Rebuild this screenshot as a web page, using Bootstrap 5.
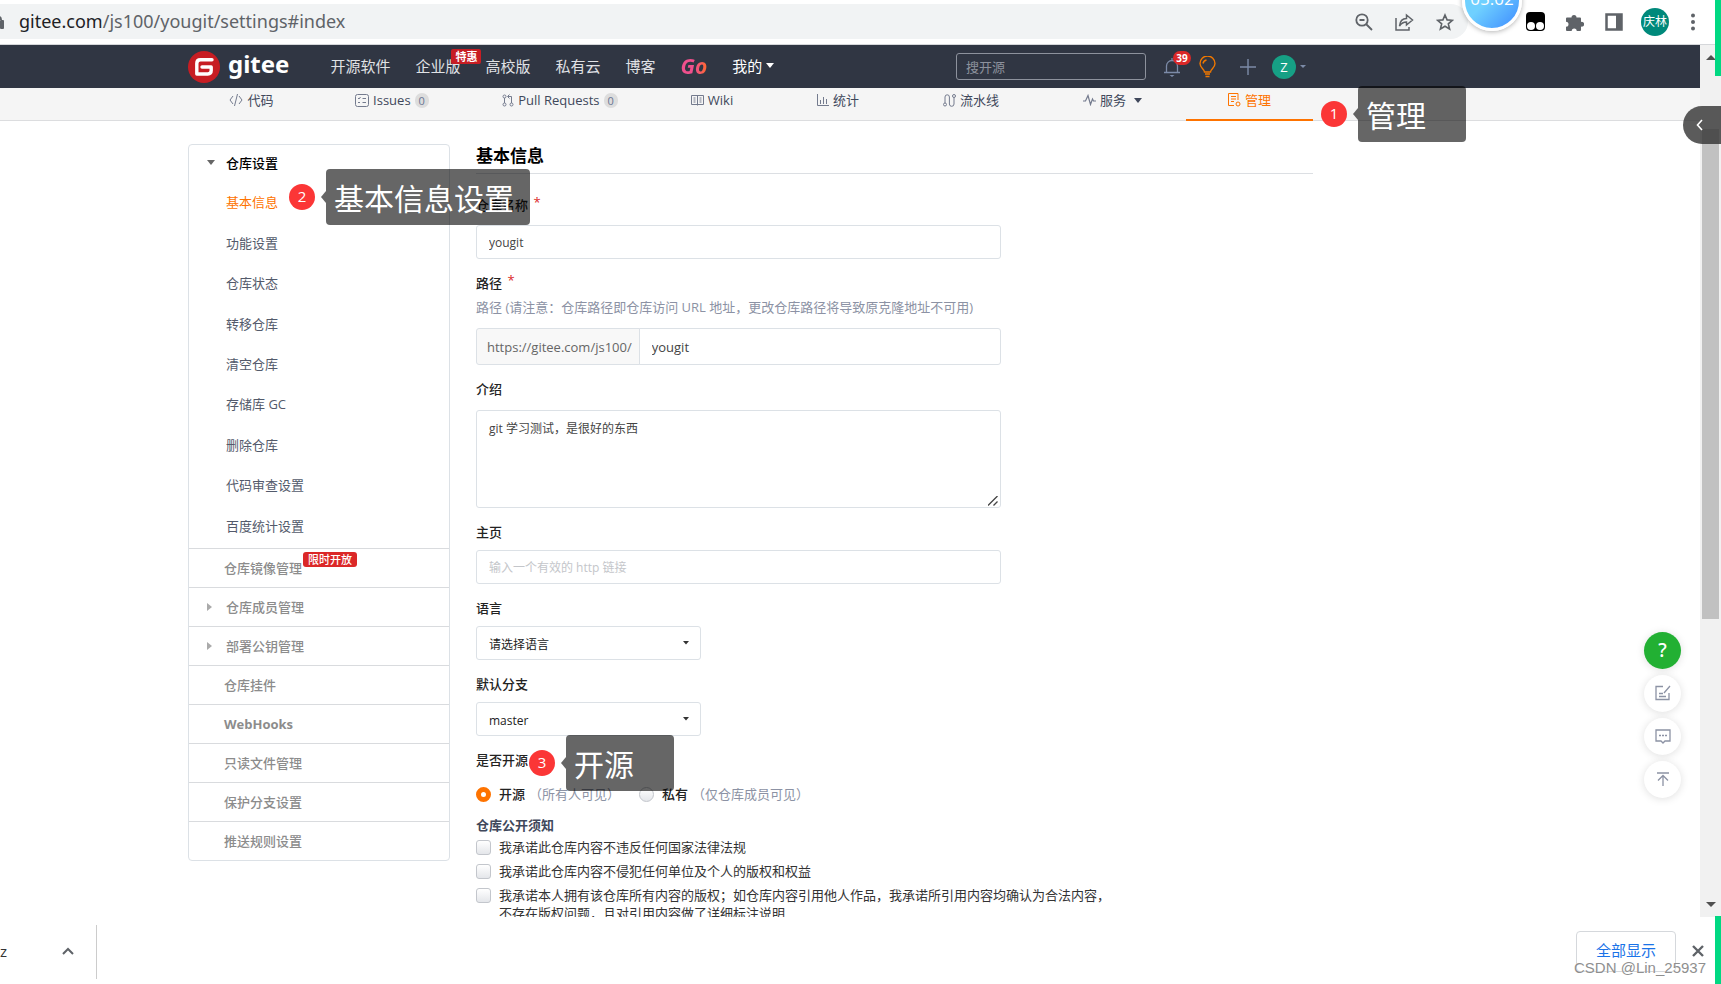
<!DOCTYPE html>
<html lang="zh-CN">
<head>
<meta charset="utf-8">
<meta name="viewport" content="width=device-width, initial-scale=1">
<title>gitee.com/js100/yougit/settings#index</title>
<link href="https://cdn.jsdelivr.net/npm/bootstrap@5.3.0/dist/css/bootstrap.min.css" rel="stylesheet">
<style>
:root{--ink:#40485b;--muted:#8c92a4;--orange:#fe7300;--line:#dce1e6;--dark:#303643}
body{font-family:"Open Sans","Noto Sans CJK SC",sans-serif;font-size:13px;line-height:20px;color:#333;background:#fff}
a{text-decoration:none;color:inherit}
svg{display:block;flex:none}
button{border:0;background:none;padding:0;color:inherit}
.z-lift{z-index:5}
/* browser chrome */
.chrome-bar{height:45px;border-bottom:1px solid #d5d7da;padding:4px 25px 5px 0;color:#5f6368}
.omnibox{height:35px;background:#f1f3f4;border-radius:0 18px 18px 0;padding-right:14px;gap:22px}
.address{height:35px;margin-left:-7px;font:18px/34px "Noto Sans",sans-serif;color:#5f6368}
.address b{font-weight:400;color:#202124}
.clock{left:1462px;top:-29px;width:60px;height:60px;border-radius:50%;border:3px solid #fff;background:linear-gradient(135deg,#6fd0ff 45%,#3d8bff);box-shadow:0 1px 5px rgba(0,0,0,.3);color:#fff;font-size:17px;text-align:center;padding-top:15px}
.ext-icons{gap:21px;padding-left:58px}
.profile{width:28px;height:28px;margin-left:-3px;border-radius:50%;background:#00897b;color:#fff;font-size:12px}
.edge-strip{right:0;width:6px;background:#00d882}
/* page */
.wrap-main{margin-left:188px;max-width:1125px}
.site-nav{height:43px;background:var(--dark);color:#e0e2e6;font-size:15px}
.brand-word{font:bold 24px/30px "Noto Sans",sans-serif;color:#fff;padding-bottom:6px}
.menu-set{gap:25px;margin-left:41px;padding-bottom:2px}
.promo{left:36px;top:-7px;background:#c71d23;color:#fff;font:bold 11px/15px "Noto Sans CJK SC",sans-serif;padding:0 4px;border-radius:2px;white-space:nowrap}
.go-word{font:italic bold 21px/24px "Noto Sans",sans-serif;background:linear-gradient(90deg,#f0508c 55%,#ff6a2b);-webkit-background-clip:text;color:transparent}
.tri{display:inline-block;border:4px solid transparent;border-top:5px solid currentColor;border-bottom:0}
.tri-s{border-width:3px 3px 0}
.nav-tools{padding-right:7px}
.search-box{width:190px;height:27px;background:transparent;border:1px solid #8d929d;border-radius:3px;padding:0 9px;font-size:13px;color:#fff}
.search-box::placeholder{color:#8d929d}
.bell{margin:0 18px 0 17px}
.count{left:10px;top:-6px;min-width:18px;height:14px;border-radius:7px;background:#db2828;color:#fff;font:bold 10px/14px "Open Sans",sans-serif;text-align:center}
.me{width:24px;height:24px;border-radius:50%;background:#16a085;color:#fff;font-size:13px}
.tab-strip{height:33px;background:#f5f5f5;border-bottom:1px solid #dcdddf;color:var(--ink)}
.tab-grid{display:grid;grid-template-columns:127fr 154fr 182fr 122fr 130fr 136fr 147fr 127fr}
.tab-grid>a{height:33px;padding-bottom:9px;gap:4px;color:var(--ink);stroke:#747b8e}
.tab-grid>a.on{color:var(--orange);stroke:var(--orange);border-bottom:2px solid var(--orange);padding-bottom:7px}
.pill{background:#ddd;border-radius:8px;font-size:11px;line-height:15px;padding:0 4px;color:#6b7794}
/* sidebar */
.side{width:262px;border:1px solid var(--line);border-radius:4px;color:#8c8c8c}
.side-head{height:37px;padding:0 0 2px 37px;color:#000;font-weight:500}
.side-sub{min-height:366px;padding-bottom:2px;color:#535a6b}
.side-sub a{flex:1;padding-left:37px}
.side-sub a.on{color:var(--orange)}
.side-row{height:39px;border-top:1px solid #d9dbde;padding:0 0 1px 35px;font-weight:500}
.side-row.nest{padding-left:37px}
.fold{left:18px}
.fresh{background:#db2828;color:#fff;font-size:11px;line-height:15px;padding:0 5px;margin-left:1px;border-radius:3px;align-self:flex-start;margin-top:3px}
/* form */
.pane{margin-left:26px}
.pane h1{font-size:17px;line-height:24px;font-weight:700;color:#000;margin:0 0 21px;padding-bottom:5px;border-bottom:1px solid #dcdfe3}
.half{width:525px}
.cap{display:block;font-weight:500;color:#222;line-height:20px}
.cap sup{color:#db2828;font-size:13px;top:-3px;left:2px}
.field{margin-bottom:14px}
.hint{color:var(--muted)}
.half .form-control,.half .form-select,.half .input-group-text{border-color:var(--line);border-radius:3px;font-size:12px;color:#444;padding:1px 12px 0;height:34px}
.half .form-control::placeholder{color:#c4c6ca}
.half .input-group>*{height:37px;font-size:13px}
.half .input-group-text{background:#f8f8f8;color:#666;padding:2px 7px 0 10px;border-radius:3px 0 0 3px}
.half textarea.form-control{height:98px;padding:9px 12px;line-height:18px;resize:none;background:no-repeat right 2px bottom 1px/10px 10px url("data:image/svg+xml,%3Csvg xmlns='http://www.w3.org/2000/svg' viewBox='0 0 10 10'%3E%3Cpath d='M0 9.500L9.500 0M5.500 9.500L9.500 5.500' stroke='%23444' stroke-width='1.300'/%3E%3C/svg%3E")}
.half .form-select{width:225px;padding:3px 12px 0;color:#222;background:no-repeat right 11px center/6px 4px url("data:image/svg+xml,%3Csvg xmlns='http://www.w3.org/2000/svg' viewBox='0 0 6 4'%3E%3Cpath d='M0 0h6L3 3.500z' fill='%23333'/%3E%3C/svg%3E")}
.tick{appearance:none;flex:none;width:15px;height:15px;margin:0 8px 0 0;border:1px solid #c3c6cc;border-radius:3px;background:linear-gradient(#fff,#e4e6ea)}
.tick[type=radio]{border-radius:50%}
.tick[type=radio]:checked{border:5px solid var(--orange);background:#fff}
.pledge{line-height:18px;max-width:640px;margin-bottom:6px}
.pledge .tick{margin-top:2px}
/* step notes */
.note{display:flex;align-items:center;z-index:6;color:#fff;white-space:nowrap}
.note i{font-style:normal;width:26px;height:26px;line-height:25px;border-radius:50%;background:#fb3636;text-align:center;font-size:15px}
.note span{position:relative;height:56px;min-width:108px;padding:0 16px 0 8px;margin-left:11px;border-radius:4px;background:rgba(0,0,0,.6);font:30px/56px "Noto Sans CJK SC",sans-serif}
.note span::before{content:"";position:absolute;left:-5px;top:22px;border:6px solid transparent;border-width:6px 5px 6px 0;border-right-color:rgba(0,0,0,.6)}
.note-1{left:135px;top:-2px}
.note-2{left:100px;top:50%;transform:translateY(-33px)}
.note-3{left:53px;top:-15px}
/* right side */
.scroll-rail{width:21px;background:#f1f1f1;color:#505050;padding:9px 2px}
.scroll-thumb{top:84px;left:2px;width:17px;height:490px;background:#c1c1c1}
.drawer{right:0;top:61px;width:38px;height:38px;border-radius:19px 0 0 19px;background:rgba(50,50,50,.8)}
.helpers{right:40px;bottom:119px;gap:6px}
.helpers button{width:37px;height:37px;border-radius:50%;background:#fff;box-shadow:0 1px 8px rgba(0,0,0,.13);stroke:var(--muted)}
.helpers .ask{background:#22b033;color:#fff;font:500 19px/37px "Noto Sans",sans-serif}
/* downloads */
.shelf{height:68px;padding-right:17px}
.shelf-item{width:97px;height:54px;margin-top:8px;border-right:1px solid #ccc;padding:0 22px 2px 0;font-size:15px}
.show-all{width:100px;height:41px;margin-top:14px;border:1px solid #d5d8dc;border-radius:4px;color:#1a73e8;font-size:15px;padding-bottom:3px}
.shut{margin:28px 0 0 16px}
.mark-text{right:15px;bottom:5px;font:15px/22px "Liberation Sans",sans-serif;color:#8f8f8f;text-shadow:0 0 1px #fff}
</style>
</head>
<body class="vh-100 d-flex flex-column overflow-hidden position-relative">
<header class="chrome-bar d-flex align-items-center position-relative">
  <div class="omnibox d-flex align-items-center flex-grow-1">
    <svg width="4" height="14" fill="#5f6368"><rect y="5" width="4" height="9" rx="1"/><path d="M0 1q2 1 2 4H0z"/></svg>
    <div class="address flex-grow-1"><b>gitee.com</b>/js100/yougit/settings#index</div>
    <svg width="18" height="18" fill="none" stroke="#5f6368" stroke-width="1.800"><circle cx="7" cy="7" r="5.700"/><path d="M11 11l6 6M4.500 7h5"/></svg>
    <svg width="19" height="18" fill="none" stroke="#5f6368" stroke-width="1.500"><path d="M1 5v12h13v-3M4.500 13c.5-5 3-7.500 7-7.500V2l6 5-6 5V9c-3 0-5 1-7 4z"/></svg>
    <svg width="18" height="18" fill="none" stroke="#5f6368" stroke-width="1.600"><path d="M9 2l2.100 4.900 5.200.4-4 3.500 1.300 5.200L9 13.200 4.400 16l1.300-5.200-4-3.500 5.200-.4z"/></svg>
  </div>
  <div class="clock position-absolute">05:02</div>
  <div class="ext-icons d-flex align-items-center">
    <svg width="19" height="19"><rect width="19" height="19" rx="4" fill="#000"/><circle cx="5" cy="14" r="4" fill="#fff"/><circle cx="14" cy="14" r="4" fill="#fff"/></svg>
    <svg width="18" height="18" fill="#5f6368"><path d="M1 4.500h4.500a2.500 2.500 0 1 1 5 0H14q1 0 1 1V9a2.400 2.400 0 1 1 0 4.500V17q0 1-1 1h-3.300a2.500 2.500 0 0 0-5 0H1q-1 0-1-1v-3.300a2.500 2.500 0 0 0 0-5V5.500q0-1 1-1z"/></svg>
    <svg width="18" height="18"><path d="M1.500 1.500h15v15h-15z" fill="none" stroke="#5f6368" stroke-width="2.500"/><path d="M11 1h6v16h-6z" fill="#5f6368"/></svg>
    <span class="profile d-flex align-items-center justify-content-center">庆林</span>
    <svg width="6" height="18" fill="#5f6368"><circle cx="3" cy="2.500" r="2"/><circle cx="3" cy="9" r="2"/><circle cx="3" cy="15.500" r="2"/></svg>
  </div>
</header>

<div class="d-flex flex-grow-1 overflow-hidden position-relative">
  <div class="flex-grow-1 overflow-hidden">
    <nav class="site-nav">
      <div class="wrap-main h-100 d-flex align-items-center">
        <a href="#" class="d-flex align-items-center">
          <svg width="32" height="32" viewBox="0 0 32 32"><circle cx="16" cy="16" r="16" fill="#c71d23"/><path d="M24 8.800H12.500Q8.800 8.800 8.800 12.500V23h11q3.400 0 3.400-3.400V16H14" fill="none" stroke="#fff" stroke-width="3.400" stroke-linecap="round" stroke-linejoin="round"/></svg>
          <span class="brand-word ms-2">gitee</span>
        </a>
        <div class="menu-set d-flex align-items-center">
          <a href="#">开源软件</a>
          <a href="#" class="position-relative">企业版<span class="promo position-absolute">特惠</span></a>
          <a href="#">高校版</a>
          <a href="#">私有云</a>
          <a href="#">博客</a>
          <a href="#" class="go-word">Go</a>
          <a href="#" class="text-white d-flex align-items-center gap-1">我的<span class="tri"></span></a>
        </div>
        <div class="nav-tools ms-auto d-flex align-items-center">
          <input class="form-control search-box" type="search" placeholder="搜开源" aria-label="搜开源">
          <a href="#" class="bell position-relative" aria-label="通知">
            <svg width="18" height="20" fill="none" stroke="#7c8ba8" stroke-width="1.300"><path d="M1 15.500h16M3.500 15V9a5.500 5.500 0 0 1 11 0v6M9 1v2"/><path d="M6.500 18h5L9 20z" fill="#7c8ba8" stroke="none"/></svg>
            <span class="count position-absolute">39</span>
          </a>
          <svg width="17" height="22" fill="none" stroke="#f07800" stroke-width="1.400"><path d="M5.500 16c0-3-4.500-4-4.500-8.500a7.500 7.500 0 0 1 15 0C16 12 11.500 13 11.500 16zM4 7.500A4.500 4.500 0 0 1 7.500 4M6 18h5M6.500 20.500h4" /></svg>
          <svg class="ms-4 me-3" width="16" height="16" stroke="#7c8ba8" stroke-width="1.400"><path d="M8 0v16M0 8h16"/></svg>
          <span class="me d-flex align-items-center justify-content-center">Z</span>
          <span class="tri tri-s ms-1" style="color:#7c8ba8"></span>
        </div>
      </div>
    </nav>

    <div class="tab-strip">
      <div class="wrap-main tab-grid">
        <a href="#" class="d-flex align-items-center justify-content-center"><svg width="14" height="12" fill="none"><path d="M4 2L1 6l3 4M10 2l3 4-3 4M8.500 0l-3 12"/></svg>代码</a>
        <a href="#" class="d-flex align-items-center justify-content-center"><svg width="14" height="13" fill="none"><rect x=".5" y=".5" width="13" height="12" rx="2"/><path d="M3 4l1 1 1.500-2M3 8.500h2M7.500 4.500H11M7.500 8.500H11"/></svg>Issues<span class="pill">0</span></a>
        <a href="#" class="d-flex align-items-center justify-content-center"><svg width="12" height="13" fill="none"><circle cx="2.500" cy="2.500" r="1.500"/><circle cx="2.500" cy="10.500" r="1.500"/><circle cx="9.500" cy="10.500" r="1.500"/><path d="M2.500 4v5M9.500 9V2.500H6M7.500.5l-2 2 2 2"/></svg>Pull Requests<span class="pill">0</span></a>
        <a href="#" class="d-flex align-items-center justify-content-center"><svg width="13" height="11" fill="none"><path d="M.5.5h12v9H.5zM6.500.5v10M2.500 3h2M2.500 5h2M2.500 7h2M8.500 3h2M8.500 5h2M8.500 7h2"/></svg>Wiki</a>
        <a href="#" class="d-flex align-items-center justify-content-center"><svg width="12" height="12" fill="none"><path d="M.5 0v11.500H12M3.500 6v4M6.500 3v7M9.500 5v5"/></svg>统计</a>
        <a href="#" class="d-flex align-items-center justify-content-center"><svg width="13" height="13" fill="none"><circle cx="2" cy="10.500" r="1.500"/><circle cx="11" cy="2" r="1.500"/><path d="M2 9V3a2.200 2.200 0 0 1 4.400 0v7A2.200 2.200 0 0 0 11 10V3.500"/></svg>流水线</a>
        <a href="#" class="d-flex align-items-center justify-content-center"><svg width="13" height="12" fill="none"><path d="M0 7h2.500L5 1.500l2.500 9L9.500 5l1 2H13" stroke-width="1.200"/></svg>服务<span class="tri ms-1"></span></a>
        <a href="#" class="on d-flex align-items-center justify-content-center position-relative"><svg width="13" height="14" fill="none"><path d="M6 12.500H.5V.500H10V7M3 3.500h5M3 6h5M3 8.500h3"/><circle cx="10" cy="11" r="2"/></svg>管理
          <span class="note note-1 position-absolute"><i>1</i><span>管理</span></span></a>
      </div>
    </div>

    <main class="wrap-main d-flex align-items-start" style="padding-top:23px">
      <aside class="side flex-shrink-0">
        <a href="#" class="side-head d-flex align-items-center position-relative"><span class="tri fold position-absolute" style="color:#666"></span>仓库设置</a>
        <div class="side-sub d-flex flex-column">
          <a href="#" class="on d-flex align-items-center position-relative">基本信息<span class="note note-2 position-absolute"><i>2</i><span>基本信息设置</span></span></a>
          <a href="#" class="d-flex align-items-center">功能设置</a>
          <a href="#" class="d-flex align-items-center">仓库状态</a>
          <a href="#" class="d-flex align-items-center">转移仓库</a>
          <a href="#" class="d-flex align-items-center">清空仓库</a>
          <a href="#" class="d-flex align-items-center">存储库 GC</a>
          <a href="#" class="d-flex align-items-center">删除仓库</a>
          <a href="#" class="d-flex align-items-center">代码审查设置</a>
          <a href="#" class="d-flex align-items-center">百度统计设置</a>
        </div>
        <a href="#" class="side-row d-flex align-items-center">仓库镜像管理<span class="fresh">限时开放</span></a>
        <a href="#" class="side-row nest d-flex align-items-center position-relative"><svg class="fold position-absolute" width="5" height="8" fill="#aaa"><path d="M0 0l5 4-5 4z"/></svg>仓库成员管理</a>
        <a href="#" class="side-row nest d-flex align-items-center position-relative"><svg class="fold position-absolute" width="5" height="8" fill="#aaa"><path d="M0 0l5 4-5 4z"/></svg>部署公钥管理</a>
        <a href="#" class="side-row d-flex align-items-center">仓库挂件</a>
        <a href="#" class="side-row d-flex align-items-center fw-bold">WebHooks</a>
        <a href="#" class="side-row d-flex align-items-center">只读文件管理</a>
        <a href="#" class="side-row d-flex align-items-center">保护分支设置</a>
        <a href="#" class="side-row d-flex align-items-center">推送规则设置</a>
      </aside>

      <form class="pane flex-grow-1">
        <h1>基本信息</h1>
        <div class="half">
          <div class="field"><label class="cap" for="f-name" style="margin-bottom:10px">仓库名称 <sup>*</sup></label>
            <input class="form-control" id="f-name" value="yougit"></div>
          <div class="field"><label class="cap mb-1" for="f-path">路径 <sup>*</sup></label>
            <div class="hint" style="margin-bottom:11px">路径 (请注意：仓库路径即仓库访问 URL 地址，更改仓库路径将导致原克隆地址不可用)</div>
            <div class="input-group"><span class="input-group-text">https://gitee.com/js100/</span><input class="form-control" id="f-path" value="yougit"></div></div>
          <div class="field"><label class="cap" for="f-desc" style="margin-bottom:11px">介绍</label>
            <textarea class="form-control" id="f-desc">git 学习测试，是很好的东西</textarea></div>
          <div class="field"><label class="cap mb-2" for="f-home">主页</label>
            <input class="form-control" id="f-home" placeholder="输入一个有效的 http 链接"></div>
          <div class="field"><label class="cap mb-2" for="f-lang">语言</label>
            <select class="form-select" id="f-lang"><option>请选择语言</option></select></div>
          <div class="field"><label class="cap mb-2" for="f-branch">默认分支</label>
            <select class="form-select" id="f-branch"><option>master</option></select></div>
        </div>
        <div class="cap position-relative" style="margin-bottom:14px">是否开源<span class="note note-3 position-absolute"><i>3</i><span>开源</span></span></div>
        <div class="d-flex" style="margin-bottom:11px;gap:19px">
          <label class="d-flex align-items-center"><input class="tick" type="radio" name="open" checked><span class="cap">开源</span><span class="hint ms-1">（所有人可见）</span></label>
          <label class="d-flex align-items-center"><input class="tick" type="radio" name="open"><span class="cap">私有</span><span class="hint ms-1">（仅仓库成员可见）</span></label>
        </div>
        <div class="fw-bold" style="color:var(--ink);margin-bottom:3px">仓库公开须知</div>
        <label class="pledge d-flex"><input class="tick" type="checkbox">我承诺此仓库内容不违反任何国家法律法规</label>
        <label class="pledge d-flex"><input class="tick" type="checkbox">我承诺此仓库内容不侵犯任何单位及个人的版权和权益</label>
        <label class="pledge d-flex"><input class="tick" type="checkbox">我承诺本人拥有该仓库所有内容的版权；如仓库内容引用他人作品，我承诺所引用内容均确认为合法内容，不存在版权问题，且对引用内容做了详细标注说明</label>
      </form>
    </main>
  </div>

  <div class="scroll-rail flex-shrink-0 d-flex flex-column justify-content-between align-items-center position-relative">
    <svg width="10" height="6" fill="#505050"><path d="M0 6l5-5 5 5z"/></svg>
    <div class="scroll-thumb position-absolute"></div>
    <svg width="10" height="6" fill="#505050"><path d="M0 0l5 5 5-5z"/></svg>
  </div>
  <button class="drawer position-absolute d-flex align-items-center justify-content-center" aria-label="展开"><svg width="12" height="12" fill="none" stroke="#fff" stroke-width="1.600"><path d="M6 1L1.500 6 6 11"/></svg></button>
  <div class="helpers position-absolute d-flex flex-column">
    <button class="ask">?</button>
    <button class="d-flex align-items-center justify-content-center" aria-label="反馈"><svg width="16" height="16" fill="none" stroke-width="1.300"><path d="M8 1.500H1v13h13V8M15 1L9 8M4 8.500h4M4 11.500h7"/></svg></button>
    <button class="d-flex align-items-center justify-content-center" aria-label="评论"><svg width="16" height="15" fill="none" stroke-width="1.300"><path d="M1 1h14v11h-5l-2 2-2-2H1zM4 6.500h2M7 6.500h2M10 6.500h2"/></svg></button>
    <button class="d-flex align-items-center justify-content-center" aria-label="返回顶部"><svg width="14" height="15" fill="none" stroke-width="1.300"><path d="M1 1h12M7 14V4M2 8.500l5-5 5 5"/></svg></button>
  </div>
</div>

<footer class="shelf d-flex align-items-start position-relative">
  <div class="shelf-item d-flex align-items-center justify-content-between">z<svg width="12" height="8" fill="none" stroke="#5f6368" stroke-width="2"><path d="M1 7l5-5 5 5"/></svg></div>
  <button class="show-all ms-auto">全部显示</button>
  <button class="shut" aria-label="关闭"><svg width="12" height="12" stroke="#5f6368" stroke-width="2.400"><path d="M1 1l10 10M11 1L1 11"/></svg></button>
  <span class="mark-text position-absolute">CSDN @Lin_25937</span>
</footer>
<div class="edge-strip position-absolute top-0 z-lift" style="height:76px"></div>
<div class="edge-strip position-absolute bottom-0 z-lift" style="height:68px"></div>
<script src="https://cdn.jsdelivr.net/npm/bootstrap@5.3.0/dist/js/bootstrap.bundle.min.js"></script>
</body>
</html>
